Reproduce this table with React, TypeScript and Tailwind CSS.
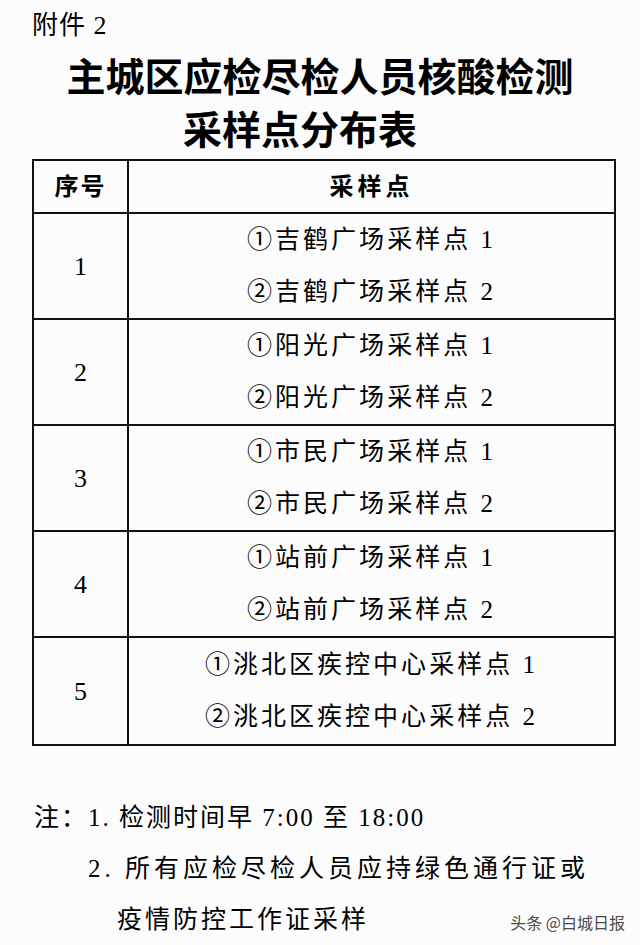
const rows = [
  { n: '1', place: '吉鹤广场' },
  { n: '2', place: '阳光广场' },
  { n: '3', place: '市民广场' },
  { n: '4', place: '站前广场' },
  { n: '5', place: '洮北区疾控中心' },
]

export default function App() {
  return (
    <div className="relative h-[945px] w-[640px] overflow-hidden bg-[#fcfcfd] text-black font-['Liberation_Serif','Noto_Sans_CJK_SC',serif]">
      {/* Attachment label */}
      <div className="pt-[13px] pl-[32px] text-[26px] leading-[26px] tracking-[1px]">附件 2</div>

      {/* Title */}
      <div className="mt-[12px] text-[39px] font-bold leading-[53px]">
        <div className="text-center">主城区应检尽检人员核酸检测</div>
        <div className="pl-[183px]">采样点分布表</div>
      </div>

      {/* Table */}
      <div className="mt-[2px] ml-[32px] w-[584px] border-2 border-[#111]">
        <div className="grid h-[53px] grid-cols-[95px_1fr] border-b-2 border-[#111] text-[24px] font-bold">
          <div className="flex items-center justify-center border-r-2 border-[#111] tracking-[2px]">序号</div>
          <div className="flex items-center justify-center tracking-[4px]">采样点</div>
        </div>
        {rows.map((row, i) => (
          <div
            key={row.n}
            className={`grid h-[106px] grid-cols-[95px_1fr] ${i < rows.length - 1 ? 'border-b-2 border-[#111]' : ''}`}
          >
            <div className="flex items-center justify-center border-r-2 border-[#111] text-[26px]">{row.n}</div>
            <div className="flex flex-col items-center justify-center text-[25px] leading-[52px] tracking-[3px]">
              <div>①{row.place}采样点 1</div>
              <div>②{row.place}采样点 2</div>
            </div>
          </div>
        ))}
      </div>

      {/* Notes */}
      <div className="mt-[46px] text-[25px] leading-[51px]">
        <div className="pl-[34px] tracking-[2px]">
          注：1. 检测时间早 7:00 至 18:00
        </div>
        <div className="pl-[88px] tracking-[4px]">2. 所有应检尽检人员应持绿色通行证或</div>
        <div className="pl-[117px] tracking-[3px]">疫情防控工作证采样</div>
      </div>

      {/* Watermark */}
      <div className="absolute top-[912px] right-[15px] text-[16px] leading-[20px] text-[#4a4a4a] font-['Noto_Sans_CJK_SC',sans-serif] [text-shadow:0_0_2px_#fff]">
        头条 @白城日报
      </div>
    </div>
  )
}
